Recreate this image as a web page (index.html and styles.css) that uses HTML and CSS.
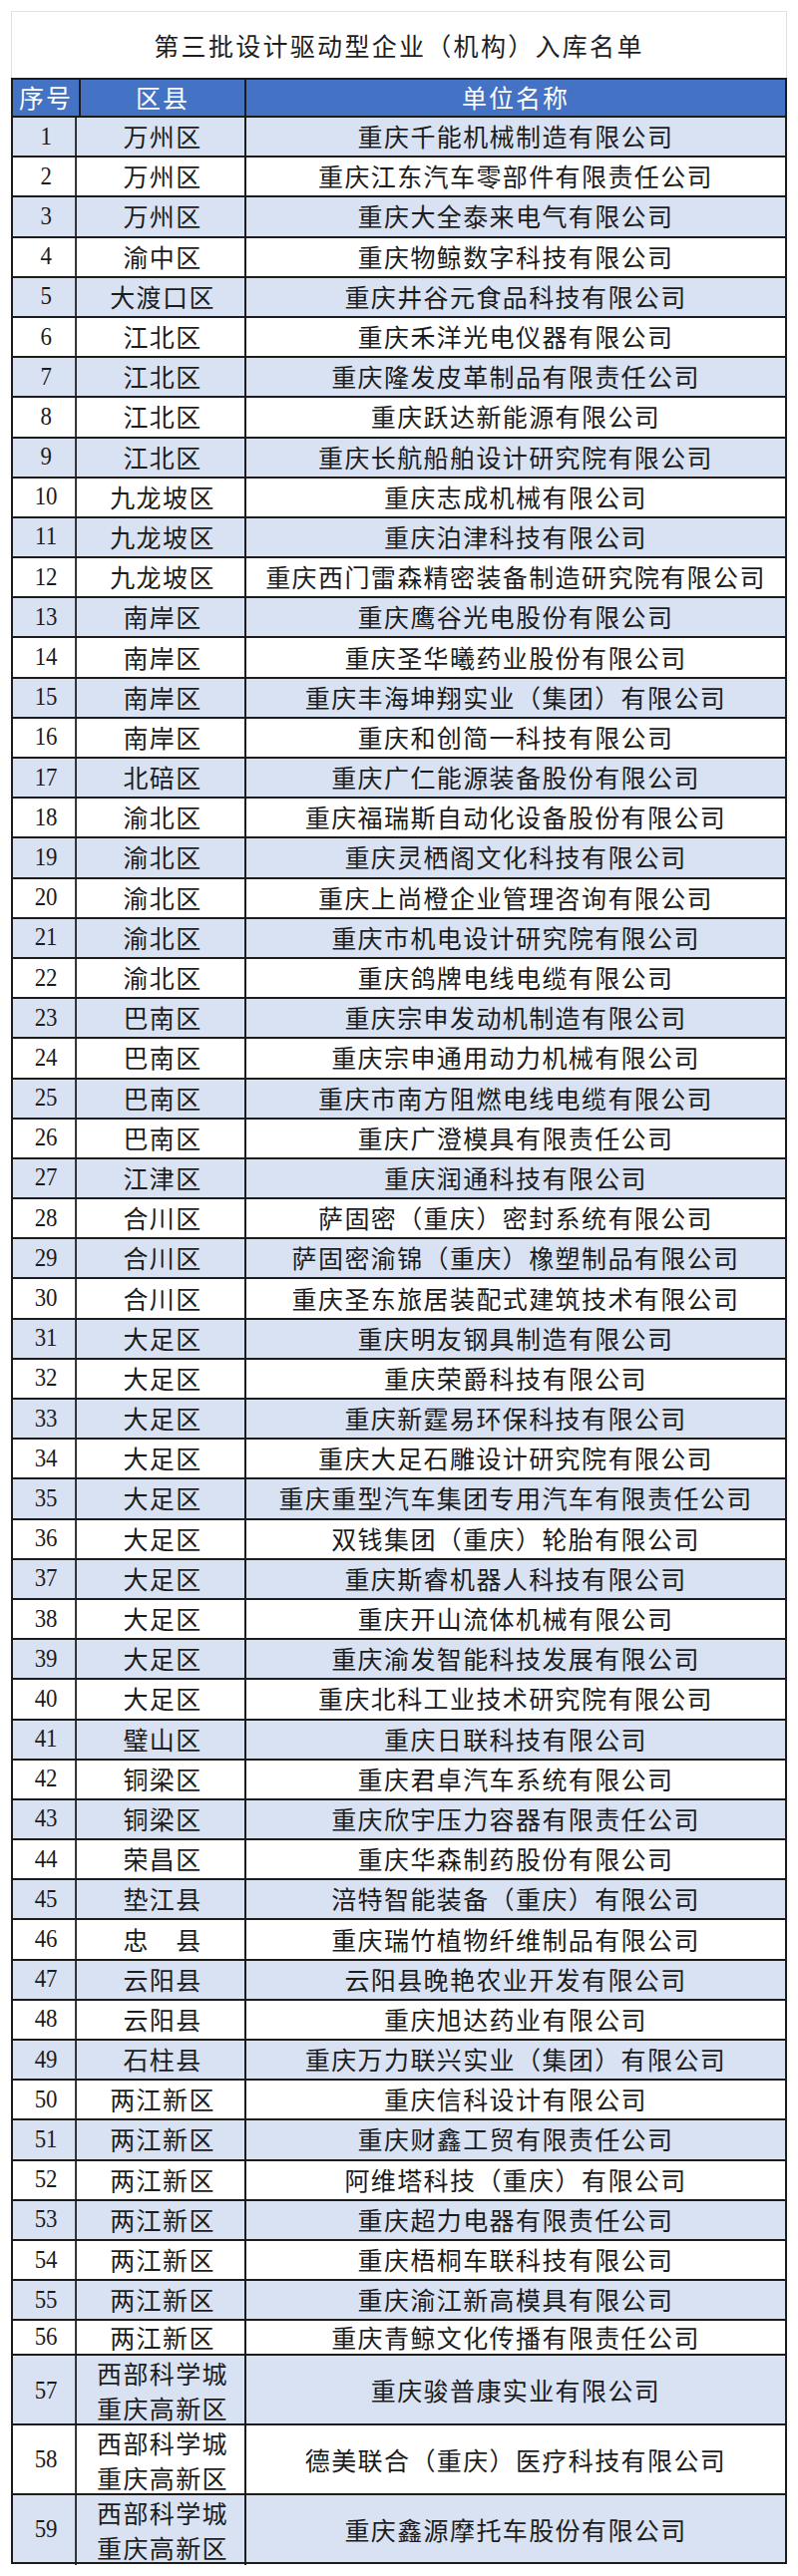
FILE: index.html
```html
<!DOCTYPE html>
<html lang="zh-CN">
<head>
<meta charset="utf-8">
<title>第三批设计驱动型企业（机构）入库名单</title>
<link rel="stylesheet" href="styles.css">
</head>
<body>
<div class="page">
  <div class="title">第三批设计驱动型企业（机构）入库名单</div>
  <div class="table">
    <div class="row head"><div class="c">序号</div><div class="c">区县</div><div class="c">单位名称</div></div>
    <div class="row odd"><div class="c n">1</div><div class="c">万州区</div><div class="c">重庆千能机械制造有限公司</div></div>
    <div class="row"><div class="c n">2</div><div class="c">万州区</div><div class="c">重庆江东汽车零部件有限责任公司</div></div>
    <div class="row odd"><div class="c n">3</div><div class="c">万州区</div><div class="c">重庆大全泰来电气有限公司</div></div>
    <div class="row"><div class="c n">4</div><div class="c">渝中区</div><div class="c">重庆物鲸数字科技有限公司</div></div>
    <div class="row odd"><div class="c n">5</div><div class="c">大渡口区</div><div class="c">重庆井谷元食品科技有限公司</div></div>
    <div class="row"><div class="c n">6</div><div class="c">江北区</div><div class="c">重庆禾洋光电仪器有限公司</div></div>
    <div class="row odd"><div class="c n">7</div><div class="c">江北区</div><div class="c">重庆隆发皮革制品有限责任公司</div></div>
    <div class="row"><div class="c n">8</div><div class="c">江北区</div><div class="c">重庆跃达新能源有限公司</div></div>
    <div class="row odd"><div class="c n">9</div><div class="c">江北区</div><div class="c">重庆长航船舶设计研究院有限公司</div></div>
    <div class="row"><div class="c n">10</div><div class="c">九龙坡区</div><div class="c">重庆志成机械有限公司</div></div>
    <div class="row odd"><div class="c n">11</div><div class="c">九龙坡区</div><div class="c">重庆泊津科技有限公司</div></div>
    <div class="row"><div class="c n">12</div><div class="c">九龙坡区</div><div class="c">重庆西门雷森精密装备制造研究院有限公司</div></div>
    <div class="row odd"><div class="c n">13</div><div class="c">南岸区</div><div class="c">重庆鹰谷光电股份有限公司</div></div>
    <div class="row"><div class="c n">14</div><div class="c">南岸区</div><div class="c">重庆圣华曦药业股份有限公司</div></div>
    <div class="row odd"><div class="c n">15</div><div class="c">南岸区</div><div class="c">重庆丰海坤翔实业（集团）有限公司</div></div>
    <div class="row"><div class="c n">16</div><div class="c">南岸区</div><div class="c">重庆和创简一科技有限公司</div></div>
    <div class="row odd"><div class="c n">17</div><div class="c">北碚区</div><div class="c">重庆广仁能源装备股份有限公司</div></div>
    <div class="row"><div class="c n">18</div><div class="c">渝北区</div><div class="c">重庆福瑞斯自动化设备股份有限公司</div></div>
    <div class="row odd"><div class="c n">19</div><div class="c">渝北区</div><div class="c">重庆灵栖阁文化科技有限公司</div></div>
    <div class="row"><div class="c n">20</div><div class="c">渝北区</div><div class="c">重庆上尚橙企业管理咨询有限公司</div></div>
    <div class="row odd"><div class="c n">21</div><div class="c">渝北区</div><div class="c">重庆市机电设计研究院有限公司</div></div>
    <div class="row"><div class="c n">22</div><div class="c">渝北区</div><div class="c">重庆鸽牌电线电缆有限公司</div></div>
    <div class="row odd"><div class="c n">23</div><div class="c">巴南区</div><div class="c">重庆宗申发动机制造有限公司</div></div>
    <div class="row"><div class="c n">24</div><div class="c">巴南区</div><div class="c">重庆宗申通用动力机械有限公司</div></div>
    <div class="row odd"><div class="c n">25</div><div class="c">巴南区</div><div class="c">重庆市南方阻燃电线电缆有限公司</div></div>
    <div class="row"><div class="c n">26</div><div class="c">巴南区</div><div class="c">重庆广澄模具有限责任公司</div></div>
    <div class="row odd"><div class="c n">27</div><div class="c">江津区</div><div class="c">重庆润通科技有限公司</div></div>
    <div class="row"><div class="c n">28</div><div class="c">合川区</div><div class="c">萨固密（重庆）密封系统有限公司</div></div>
    <div class="row odd"><div class="c n">29</div><div class="c">合川区</div><div class="c">萨固密渝锦（重庆）橡塑制品有限公司</div></div>
    <div class="row"><div class="c n">30</div><div class="c">合川区</div><div class="c">重庆圣东旅居装配式建筑技术有限公司</div></div>
    <div class="row odd"><div class="c n">31</div><div class="c">大足区</div><div class="c">重庆明友钢具制造有限公司</div></div>
    <div class="row"><div class="c n">32</div><div class="c">大足区</div><div class="c">重庆荣爵科技有限公司</div></div>
    <div class="row odd"><div class="c n">33</div><div class="c">大足区</div><div class="c">重庆新霆易环保科技有限公司</div></div>
    <div class="row"><div class="c n">34</div><div class="c">大足区</div><div class="c">重庆大足石雕设计研究院有限公司</div></div>
    <div class="row odd"><div class="c n">35</div><div class="c">大足区</div><div class="c">重庆重型汽车集团专用汽车有限责任公司</div></div>
    <div class="row"><div class="c n">36</div><div class="c">大足区</div><div class="c">双钱集团（重庆）轮胎有限公司</div></div>
    <div class="row odd"><div class="c n">37</div><div class="c">大足区</div><div class="c">重庆斯睿机器人科技有限公司</div></div>
    <div class="row"><div class="c n">38</div><div class="c">大足区</div><div class="c">重庆开山流体机械有限公司</div></div>
    <div class="row odd"><div class="c n">39</div><div class="c">大足区</div><div class="c">重庆渝发智能科技发展有限公司</div></div>
    <div class="row"><div class="c n">40</div><div class="c">大足区</div><div class="c">重庆北科工业技术研究院有限公司</div></div>
    <div class="row odd"><div class="c n">41</div><div class="c">璧山区</div><div class="c">重庆日联科技有限公司</div></div>
    <div class="row"><div class="c n">42</div><div class="c">铜梁区</div><div class="c">重庆君卓汽车系统有限公司</div></div>
    <div class="row odd"><div class="c n">43</div><div class="c">铜梁区</div><div class="c">重庆欣宇压力容器有限责任公司</div></div>
    <div class="row"><div class="c n">44</div><div class="c">荣昌区</div><div class="c">重庆华森制药股份有限公司</div></div>
    <div class="row odd"><div class="c n">45</div><div class="c">垫江县</div><div class="c">涪特智能装备（重庆）有限公司</div></div>
    <div class="row"><div class="c n">46</div><div class="c pre">忠　县</div><div class="c">重庆瑞竹植物纤维制品有限公司</div></div>
    <div class="row odd"><div class="c n">47</div><div class="c">云阳县</div><div class="c">云阳县晚艳农业开发有限公司</div></div>
    <div class="row"><div class="c n">48</div><div class="c">云阳县</div><div class="c">重庆旭达药业有限公司</div></div>
    <div class="row odd"><div class="c n">49</div><div class="c">石柱县</div><div class="c">重庆万力联兴实业（集团）有限公司</div></div>
    <div class="row"><div class="c n">50</div><div class="c">两江新区</div><div class="c">重庆信科设计有限公司</div></div>
    <div class="row odd"><div class="c n">51</div><div class="c">两江新区</div><div class="c">重庆财鑫工贸有限责任公司</div></div>
    <div class="row"><div class="c n">52</div><div class="c">两江新区</div><div class="c">阿维塔科技（重庆）有限公司</div></div>
    <div class="row odd"><div class="c n">53</div><div class="c">两江新区</div><div class="c">重庆超力电器有限责任公司</div></div>
    <div class="row"><div class="c n">54</div><div class="c">两江新区</div><div class="c">重庆梧桐车联科技有限公司</div></div>
    <div class="row odd"><div class="c n">55</div><div class="c">两江新区</div><div class="c">重庆渝江新高模具有限公司</div></div>
    <div class="row short"><div class="c n">56</div><div class="c">两江新区</div><div class="c">重庆青鲸文化传播有限责任公司</div></div>
    <div class="row odd tall"><div class="c n">57</div><div class="c two">西部科学城<br>重庆高新区</div><div class="c">重庆骏普康实业有限公司</div></div>
    <div class="row tall"><div class="c n">58</div><div class="c two">西部科学城<br>重庆高新区</div><div class="c">德美联合（重庆）医疗科技有限公司</div></div>
    <div class="row odd tall"><div class="c n">59</div><div class="c two">西部科学城<br>重庆高新区</div><div class="c">重庆鑫源摩托车股份有限公司</div></div>
  </div>
</div>
</body>
</html>
```

FILE: styles.css
```css
html, body {
  margin: 0;
  padding: 0;
  background: #ffffff;
}

.page {
  margin: 11px 11px 0 11px;
  width: 778px;
  padding-bottom: 11px;
}

.title {
  box-sizing: border-box;
  height: 67px;
  border: 1px solid #e2e2e2;
  border-bottom: none;
  display: flex;
  align-items: center;
  justify-content: center;
  font-family: "Noto Sans CJK SC", "Noto Sans", sans-serif;
  font-size: 25px;
  letter-spacing: 2.3px;
  color: #1e1e1e;
}

.table {
  border: 2px solid #1c1c1c;
  border-bottom: none;
  font-family: "Liberation Serif", "Noto Sans CJK SC", serif;
  color: #1c1c1c;
}

.row {
  box-sizing: border-box;
  display: grid;
  grid-template-columns: 68px 166px 1fr;
  height: 40.2px;
  border-bottom: 2px solid #1c1c1c;
  background: #ffffff;
}

.row.odd {
  background: #d9e2f3;
}

.row.head {
  height: 38px;
  background: #4472c4;
  color: #ffffff;
  font-family: "Noto Sans CJK SC", sans-serif;
}

.row.short {
  height: 35px;
}

.row.tall {
  height: 69.6px;
}

.c {
  display: flex;
  align-items: center;
  justify-content: center;
  text-align: center;
  font-size: 25px;
  letter-spacing: 1.4px;
  white-space: nowrap;
  border-right: 2px solid #1c1c1c;
  font-family: "Noto Sans CJK SC", sans-serif;
  line-height: 1;
  padding-bottom: 1px;
}

.c:last-child {
  border-right: none;
}

.c.n {
  font-family: "Liberation Serif", serif;
  font-size: 26px;
  letter-spacing: 0;
  transform: scaleX(0.88);
}

.row.head .c {
  font-size: 25px;
  letter-spacing: 2px;
}

.c.two {
  line-height: 35px;
  padding-bottom: 0;
}
```
